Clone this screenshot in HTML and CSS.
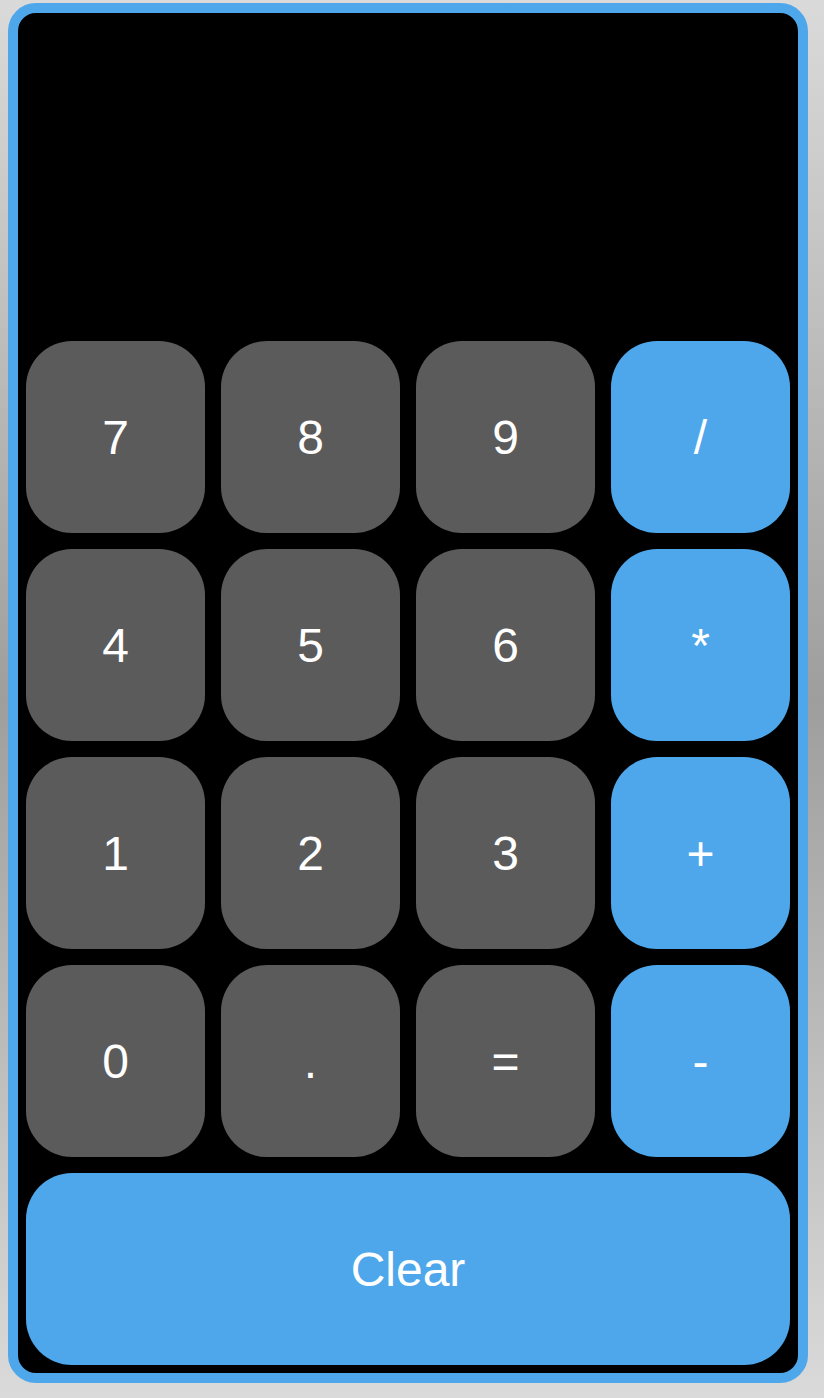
FILE: index.html
```html
<!DOCTYPE html>
<html lang="en">
<head>
<meta charset="utf-8">
<title>Calculator</title>
<link rel="stylesheet" href="styles.css">
</head>
<body>
<div class="calculator">
  <div class="display"></div>
  <div class="keys">
    <button class="key num">7</button>
    <button class="key num">8</button>
    <button class="key num">9</button>
    <button class="key op">/</button>
    <button class="key num">4</button>
    <button class="key num">5</button>
    <button class="key num">6</button>
    <button class="key op">*</button>
    <button class="key num">1</button>
    <button class="key num">2</button>
    <button class="key num">3</button>
    <button class="key op">+</button>
    <button class="key num">0</button>
    <button class="key num">.</button>
    <button class="key num">=</button>
    <button class="key op">-</button>
    <button class="key op clear">Clear</button>
  </div>
</div>
</body>
</html>
```
FILE: styles.css
```css
html {
  height: 100%;
  background: linear-gradient(to bottom, #dadada 0%, #9e9e9e 50%, #dadada 100%);
}
body {
  margin: 3px 8px 0 8px;
  font-family: "Liberation Sans", Arial, sans-serif;
}
.calculator {
  width: 800px;
  box-sizing: border-box;
  border: 10px solid #4da7ea;
  border-radius: 28px;
  background: #000;
  padding: 8px;
}
.display {
  height: 304px;
  margin-bottom: 16px;
}
.keys {
  display: grid;
  grid-template-columns: repeat(4, 179px);
  grid-auto-rows: 192px;
  gap: 16px;
}
.key {
  border: none;
  border-radius: 46px;
  color: #fff;
  font-family: "Liberation Sans", Arial, sans-serif;
  font-size: 48px;
  padding: 0;
  margin: 0;
  display: flex;
  align-items: center;
  justify-content: center;
}
.num {
  background: #5b5b5b;
}
.op {
  background: #4da7ea;
}
.clear {
  grid-column: 1 / -1;
}
```
